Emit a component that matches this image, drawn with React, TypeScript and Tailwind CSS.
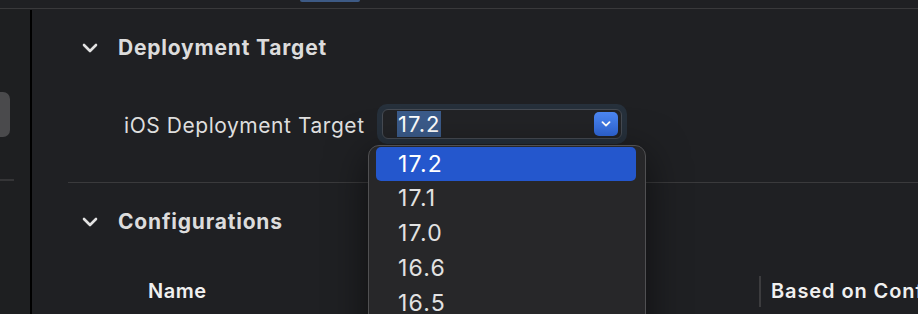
import React from 'react';

const versions = ['17.2', '17.1', '17.0', '16.6', '16.5', '16.4'];

function Chevron({ className = '' }: { className?: string }) {
  return (
    <svg width="16" height="10" viewBox="0 0 16 10" className={className}>
      <path d="M2 2 L8 8 L14 2" fill="none" stroke="#e2e2e2" strokeWidth="2.6" strokeLinecap="round" strokeLinejoin="round" />
    </svg>
  );
}

function SectionHeader({ title }: { title: string }) {
  return (
    <div className="h-[36px] flex items-center pl-[50px] gap-[20px]">
      <Chevron />
      <span className="text-[21px] font-bold text-[#dcdcdc] tracking-[0.8px]">{title}</span>
    </div>
  );
}

export default function App() {
  return (
    <div className="w-[918px] h-[314px] bg-[#1f2023] overflow-hidden relative font-['Inter',sans-serif]">
      {/* tab bar remnant */}
      <div className="h-[8px]">
        <div className="ml-[300px] w-[60px] h-[2px] bg-[#3d5a85] rounded-b-[3px]" />
      </div>
      <div className="h-px bg-[#39393b]" />

      <div className="flex h-[305px]">
        {/* sidebar */}
        <aside className="w-[30px] shrink-0 bg-[#1e1f21]">
          <div className="mt-[83px] h-[45px] w-[10px] rounded-r-[7px] bg-[#4a4a4c]" />
          <div className="mt-[42px] h-[2px] w-[14px] bg-[#353537]" />
        </aside>
        <div className="w-[2px] shrink-0 bg-black mt-px" />

        {/* content */}
        <main className="flex-1 min-w-0 overflow-hidden">
          <div className="mt-[21px]">
            <SectionHeader title="Deployment Target" />
          </div>

          <div className="mt-[38px] h-[40px] flex items-center pl-[92px]">
            <span className="w-[253px] shrink-0 text-[21px] tracking-[0.55px] text-[#dedede] pt-[3px]">iOS Deployment Target</span>
            <div className="p-[5px] shrink-0 rounded-[10px] bg-[#26303b]">
              <div className="w-[240px] h-[30px] rounded-[6px] border border-[#464b53] bg-[#222326] flex items-center pl-[14px] pr-[3px]">
                <span className="h-[26px] px-px bg-[#3b5b8a] text-[22px] tracking-[1px] leading-[26px] text-white">17.2</span>
                <div className="ml-auto w-[24px] h-[24px] rounded-[5px] bg-gradient-to-b from-[#4c87f2] to-[#2f66d8] flex items-center justify-center">
                  <svg width="10" height="6" viewBox="0 0 10 6">
                    <path d="M1.5 1.2 L5 4.6 L8.5 1.2" fill="none" stroke="white" strokeWidth="1.8" strokeLinecap="round" strokeLinejoin="round" />
                  </svg>
                </div>
              </div>
            </div>
          </div>

          <div className="mt-[38px] ml-[36px] h-px bg-[#3a3a3c]" />

          <div className="mt-[21px]">
            <SectionHeader title="Configurations" />
          </div>

          <div className="mt-[35px] h-[32px] flex items-center pl-[116px]">
            <span className="w-[611px] shrink-0 text-[20px] tracking-[0.5px] font-semibold text-[#f0f0f0]">Name</span>
            <div className="w-[2px] h-[31px] shrink-0 bg-[#3c3c3e]" />
            <span className="pl-[10px] text-[20px] tracking-[0.9px] font-semibold text-[#f0f0f0] whitespace-nowrap">Based on Configuration File</span>
          </div>
        </main>
      </div>

      {/* popup menu */}
      <div className="absolute left-[368px] top-[145px] w-[278px] h-[240px] rounded-t-[11px] border border-[#505052] bg-[#272729] shadow-[0_10px_40px_rgba(0,0,0,0.55)] pl-[7px] pr-[9px] pt-px">
        {versions.map((v, i) => (
          <div
            key={v}
            className={
              i === 0
                ? 'h-[34px] rounded-[5px] bg-[#2457cd] flex items-center pl-[22px] text-[23px] tracking-[1.2px] text-white'
                : 'h-[35px] flex items-center pl-[22px] text-[23px] tracking-[1.2px] text-[#e2e2e2]'
            }
          >
            {v}
          </div>
        ))}
      </div>
    </div>
  );
}
